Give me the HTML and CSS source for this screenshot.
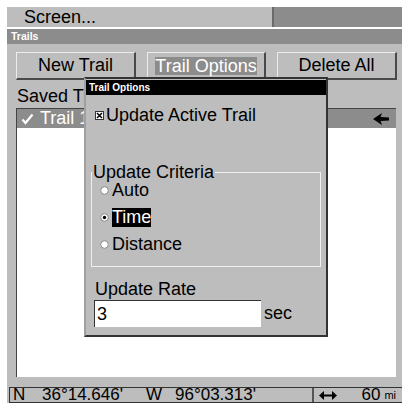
FILE: index.html
```html
<!DOCTYPE html>
<html lang="en">
<head>
    <meta charset="UTF-8">
    <meta name="viewport" content="width=device-width, initial-scale=1.0">
    <title>Trails</title>
    <link rel="stylesheet" href="styles.css">
</head>
<body>
    <div class="screen">
        <div class="menubar">
            <div class="menu-item">Screen...</div>
            <div class="menu-rest"></div>
        </div>
        <div class="titlebar">Trails</div>

        <div class="panel">
            <div class="button-row">
                <div class="button">New Trail</div>
                <div class="button narrow"><span class="focus">Trail Options</span></div>
                <div class="button">Delete All</div>
            </div>
            <div class="label">Saved Trails</div>
            <div class="list">
                <div class="list-row selected">
                    <svg class="tick" width="13" height="12" viewBox="0 0 13 12">
                        <polyline points="1.5,6.5 4.5,10 11.5,1.5" fill="none" stroke="#fff" stroke-width="2.2"/>
                    </svg>
                    <span class="row-name">Trail 1</span>
                    <svg class="arrow" width="16" height="12" viewBox="0 0 16 12">
                        <polygon points="0,6 9,0 7.5,4 16,4.5 16,7.5 7.5,8 9,12" fill="#000"/>
                    </svg>
                </div>
            </div>
        </div>

        <div class="statusbar">
            <span class="st-n">N</span>
            <span class="st-lat">36°14.646'</span>
            <span class="st-w">W</span>
            <span class="st-lon">96°03.313'</span>
            <span class="st-range">
                <svg class="range-arrow" width="18" height="9" viewBox="0 0 18 9">
                    <line x1="3" y1="4.5" x2="15" y2="4.5" stroke="#000" stroke-width="2"/>
                    <polygon points="0,4.5 5,0 5,9" fill="#000"/>
                    <polygon points="18,4.5 13,0 13,9" fill="#000"/>
                </svg>
                <span class="range-value">60</span>
                <span class="range-unit">mi</span>
            </span>
        </div>

        <!-- Trail Options popup -->
        <div class="dialog">
            <div class="dialog-title">Trail Options</div>
            <div class="check-row">
                <svg class="checkbox" width="9" height="9" viewBox="0 0 9 9">
                    <rect x="0.5" y="0.5" width="8" height="8" fill="#fff" stroke="#333"/>
                    <path d="M2 2 L7 7 M7 2 L2 7" stroke="#000" stroke-width="1.5"/>
                </svg>
                <span>Update Active Trail</span>
            </div>

            <fieldset class="criteria">
                <legend>Update Criteria</legend>
                <div class="radio-row">
                    <svg class="radio" width="9" height="9" viewBox="0 0 9 9">
                        <circle cx="4.5" cy="4.5" r="3.8" fill="#fff" stroke="#8a8a8a"/>
                    </svg>
                    <span>Auto</span>
                </div>
                <div class="radio-row">
                    <svg class="radio" width="9" height="9" viewBox="0 0 9 9">
                        <circle cx="4.5" cy="4.5" r="3.8" fill="#fff" stroke="#8a8a8a"/>
                        <circle cx="4.5" cy="4.5" r="1.7" fill="#000"/>
                    </svg>
                    <span class="selected-option">Time</span>
                </div>
                <div class="radio-row">
                    <svg class="radio" width="9" height="9" viewBox="0 0 9 9">
                        <circle cx="4.5" cy="4.5" r="3.8" fill="#fff" stroke="#8a8a8a"/>
                    </svg>
                    <span>Distance</span>
                </div>
            </fieldset>

            <div class="rate-label">Update Rate</div>
            <div class="rate-row">
                <div class="rate-input">3</div>
                <span class="rate-unit">sec</span>
            </div>
        </div>
    </div>
</body>
</html>
```

FILE: styles.css
```css
* {
    box-sizing: border-box;
}
body {
    margin: 0;
    background: #fff;
    font-family: "Liberation Sans", Arial, sans-serif;
    color: #000;
}
.screen {
    position: relative;
    margin: 7px 0 0 7px;
    width: 395px;
    height: 396px;
    background: #bdbdbd;
    display: flex;
    flex-direction: column;
    overflow: hidden;
}
.menubar {
    display: flex;
    height: 22px;
    border-bottom: 2px solid #fff;
}
.menu-item {
    width: 267px;
    padding-left: 17px;
    font-size: 18px;
    line-height: 20px;
    border-right: 2px solid #6a6a6a;
}
.menu-rest {
    flex: 1;
    background: #8c8c8c;
}
.titlebar {
    height: 15px;
    background: #8c8c8c;
    color: #fff;
    font-weight: bold;
    font-size: 10.5px;
    line-height: 15px;
    padding-left: 4px;
}
.panel {
    flex: 1;
    padding: 8px 0 10px 9px;
    display: flex;
    flex-direction: column;
}
.button-row {
    display: flex;
    gap: 11px;
    height: 28px;
}
.button {
    width: 120px;
    border-top: 1px solid #ececec;
    border-left: 1px solid #ececec;
    border-right: 2px solid #4a4a4a;
    border-bottom: 2px solid #4a4a4a;
    font-size: 18px;
    display: flex;
    align-items: center;
    justify-content: center;
}
.button.narrow {
    width: 119px;
}
.focus {
    background: #8c8c8c;
    color: #fff;
    line-height: 18px;
}
.label {
    margin-top: 6px;
    font-size: 18px;
    line-height: 20px;
    padding-left: 1px;
}
.list {
    margin-top: 2px;
    width: 380px;
    flex: 1;
    background: #fff;
    border-left: 1px solid #444;
    border-top: 1px solid #444;
}
.list-row {
    height: 19px;
    display: flex;
    align-items: center;
    font-size: 18px;
    padding-left: 4px;
}
.list-row.selected {
    background: #8c8c8c;
    color: #fff;
}
.tick {
    margin-right: 6px;
}
.arrow {
    margin-left: auto;
    margin-right: 7px;
}
.statusbar {
    height: 16px;
    margin-left: 2px;
    border-top: 1px solid #333;
    border-bottom: 1px solid #333;
    border-left: 1px solid #333;
    display: flex;
    align-items: center;
    font-size: 17px;
    line-height: 14px;
}
.st-n {
    width: 32px;
    padding-left: 3px;
}
.st-lat {
    width: 104px;
}
.st-w {
    width: 29px;
}
.st-lon {
    width: 137px;
}
.st-range {
    flex: 1;
    height: 100%;
    display: flex;
    align-items: center;
    border-left: 2px solid #555;
    padding-left: 5px;
}
.range-value {
    margin-left: auto;
    margin-right: 4px;
}
.range-unit {
    font-size: 11px;
    padding-right: 6px;
}
.dialog {
    position: absolute;
    left: 77px;
    top: 70px;
    width: 244px;
    height: 260px;
    background: #bdbdbd;
    border: 2px solid #333;
    border-left-color: #a0a0a0;
    padding-top: 1px;
    font-size: 18px;
}
.dialog-title {
    height: 15px;
    background: #000;
    color: #fff;
    font-weight: bold;
    font-size: 10px;
    line-height: 15px;
    padding-left: 3px;
}
.check-row {
    margin-top: 10px;
    display: flex;
    align-items: center;
    line-height: 20px;
    padding-left: 9px;
}
.checkbox {
    margin-right: 2px;
}
.criteria {
    margin: 39px 5px 0 5px;
    padding: 0 0 12px 0;
    border: 1px solid #efefef;
    min-width: 0;
}
.criteria legend {
    padding: 0 1px;
    line-height: 16px;
}
.radio-row {
    display: flex;
    align-items: center;
    height: 20px;
    margin-bottom: 7px;
    padding-left: 8px;
}
.radio-row:last-child {
    margin-bottom: 0;
}
.radio {
    margin-right: 3px;
}
.selected-option {
    background: #000;
    color: #fff;
    line-height: 19px;
}
.rate-label {
    margin-top: 12px;
    line-height: 20px;
    padding-left: 9px;
}
.rate-row {
    display: flex;
    align-items: center;
    margin: 1px 0 0 8px;
}
.rate-input {
    width: 167px;
    height: 27px;
    background: #fff;
    border-top: 1px solid #333;
    border-left: 1px solid #333;
    padding-left: 2px;
    line-height: 26px;
}
.rate-unit {
    margin-left: 3px;
}
```
